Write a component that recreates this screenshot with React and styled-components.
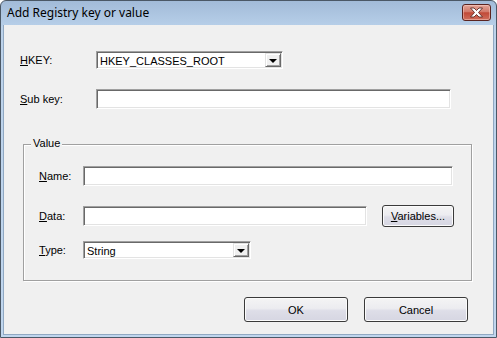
import React from "react"
import styled, { createGlobalStyle } from "styled-components"

const GlobalStyle = createGlobalStyle`
	html, body {
		margin: 0;
		padding: 0;
		background: #ffffff;
	}
	body {
		font-family: "Liberation Sans", Arial, sans-serif;
		font-size: 11px;
		color: #000;
	}
	* {
		box-sizing: border-box;
	}
`

const Window = styled.div`
	width: 497px;
	height: 338px;
	display: flex;
	flex-direction: column;
	border: 1px solid #4b5866;
	border-radius: 6px 6px 0 0;
	background: linear-gradient(#a2bbd8, #b6cee8 24px, #bcd2ea 26px, #c0d6ee);
	overflow: hidden;
`

const TitleBar = styled.div`
	height: 24px;
	flex: none;
	display: flex;
	align-items: center;
	justify-content: space-between;
	padding: 0 5px 2px 6px;
`

const Title = styled.span`
	font-family: "Noto Sans", "Open Sans", sans-serif;
	font-size: 12px;
	color: #000;
`

const CloseButton = styled.button`
	width: 29px;
	height: 17px;
	padding: 0;
	margin-top: 1px;
	display: flex;
	align-items: center;
	justify-content: center;
	border: 1px solid #5b2420;
	border-radius: 3px;
	background: linear-gradient(#e3a497, #d27a6a 45%, #c14a38 52%, #cf6e5c);
	box-shadow: inset 0 0 0 1px rgba(255, 220, 210, 0.45);
`

const Client = styled.div`
	flex: 1;
	margin: 0 2px 2px 2px;
	border: 1px solid #90a8c2;
	border-top: none;
	background: #f0f0f0;
	display: flex;
	flex-direction: column;
`

const Row = styled.div`
	display: flex;
	align-items: center;
	height: ${(p) => p.$h}px;
	margin-top: ${(p) => p.$top}px;
	padding-left: ${(p) => p.$pad || 0}px;
`

const Label = styled.label`
	width: ${(p) => p.$w}px;
	flex: none;
	font-size: 11px;
	color: #000;
	u {
		text-decoration: underline;
	}
`

const Field = styled.div`
	width: ${(p) => p.$w}px;
	height: ${(p) => p.$h}px;
	flex: none;
	background: #fff;
	border: 1px solid;
	border-color: #a0a0a0 #ffffff #ffffff #a0a0a0;
	box-shadow: inset 1px 1px 0 #696969, inset -1px -1px 0 #e3e3e3;
	display: flex;
	align-items: center;
	justify-content: space-between;
	padding: 0 1px 0 3px;
`

const ComboText = styled.span`
	font-size: 11px;
	padding-top: 1px;
`

const DropButton = styled.span`
	width: 16px;
	height: ${(p) => p.$h}px;
	display: flex;
	align-items: center;
	justify-content: center;
	background: #f0f0f0;
	border: 1px solid;
	border-color: #e3e3e3 #696969 #696969 #e3e3e3;
	box-shadow: inset 1px 1px 0 #fff, inset -1px -1px 0 #a0a0a0;
`

const Arrow = styled.span`
	width: 0;
	height: 0;
	border-left: 4px solid transparent;
	border-right: 4px solid transparent;
	border-top: 4px solid #000;
	margin-top: 1px;
`

const GroupBox = styled.div`
	position: relative;
	margin: 35px 0 0 19px;
	width: 449px;
	height: 137px;
	flex: none;
	border: 1px solid #a0a0a0;
	box-shadow: 1px 1px 0 #fff, inset 1px 1px 0 #fff;
	display: flex;
	flex-direction: column;
	padding-left: 15px;
`

const Legend = styled.span`
	position: absolute;
	top: -8px;
	left: 7px;
	padding: 0 2px;
	background: #f0f0f0;
	font-size: 11px;
`

const PushButton = styled.button`
	width: ${(p) => p.$w}px;
	height: ${(p) => p.$h}px;
	flex: none;
	padding: 0;
	border: 1px solid #3a3a3a;
	border-radius: 3px;
	background: linear-gradient(#f4f4f4, #ececf0 45%, #dedee8 55%, #d6d6e2);
	box-shadow: inset 0 0 0 1px #fbfbfb;
	font-family: "Liberation Sans", Arial, sans-serif;
	font-size: 11px;
	color: #000;
	margin-left: ${(p) => p.$ml || 0}px;
`

const ButtonBar = styled.div`
	display: flex;
	justify-content: flex-end;
	gap: 16px;
	margin-top: 16px;
	padding-right: 25px;
`

function Combo({ w, h, value }) {
	return (
		<Field $w={w} $h={h}>
			<ComboText>{value}</ComboText>
			<DropButton $h={h - 4}>
				<Arrow />
			</DropButton>
		</Field>
	)
}

function CloseIcon() {
	return (
		<svg width="15" height="11" viewBox="0 0 15 11">
			<path
				d="M1.5 1 H5 L7.5 3.5 L10 1 H13.5 L9.5 5.5 L13.5 10 H10 L7.5 7.5 L5 10 H1.5 L5.5 5.5 Z"
				fill="#ffffff"
				stroke="#5c2a26"
				strokeWidth="0.9"
				strokeLinejoin="round"
			/>
		</svg>
	)
}

export default function App() {
	return (
		<>
			<GlobalStyle />
			<Window>
				<TitleBar>
					<Title>Add Registry key or value</Title>
					<CloseButton aria-label="Close">
						<CloseIcon />
					</CloseButton>
				</TitleBar>
				<Client>
					<Row $top={26} $h={18} $pad={16}>
						<Label $w={76}>
							<u>H</u>KEY:
						</Label>
						<Combo w={187} h={18} value="HKEY_CLASSES_ROOT" />
					</Row>
					<Row $top={20} $h={20} $pad={16}>
						<Label $w={76}>
							<u>S</u>ub key:
						</Label>
						<Field $w={355} $h={20} />
					</Row>

					<GroupBox>
						<Legend>Value</Legend>
						<Row $top={21} $h={20}>
							<Label $w={44}>
								<u>N</u>ame:
							</Label>
							<Field $w={370} $h={20} />
						</Row>
						<Row $top={19} $h={22}>
							<Label $w={44}>
								<u>D</u>ata:
							</Label>
							<Field $w={284} $h={20} />
							<PushButton $w={72} $h={22} $ml={15}>
								<u>V</u>ariables...
							</PushButton>
						</Row>
						<Row $top={14} $h={18}>
							<Label $w={44}>
								<u>T</u>ype:
							</Label>
							<Combo w={168} h={18} value="String" />
						</Row>
					</GroupBox>

					<ButtonBar>
						<PushButton $w={104} $h={25}>
							OK
						</PushButton>
						<PushButton $w={104} $h={25}>
							Cancel
						</PushButton>
					</ButtonBar>
				</Client>
			</Window>
		</>
	)
}
